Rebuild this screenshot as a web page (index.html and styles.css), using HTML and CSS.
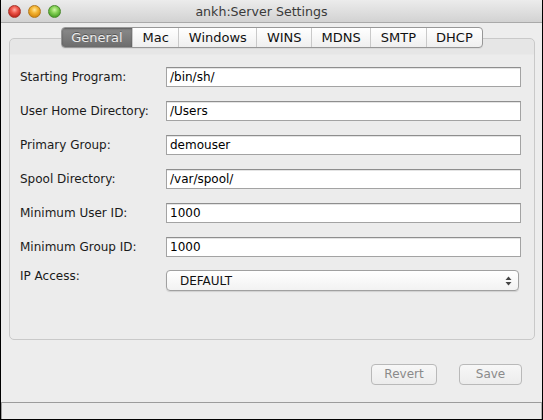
FILE: index.html
```html
<!DOCTYPE html>
<html>
<head>
<meta charset="utf-8">
<link rel="stylesheet" href="styles.css">
</head>
<body>
<div class="window">
  <div class="titlebar">
    <div class="lights">
      <span class="light red"></span>
      <span class="light yellow"></span>
      <span class="light green"></span>
    </div>
    <div class="title">ankh:Server Settings</div>
  </div>
  <div class="body">
    <div class="tabpanel">
      <div class="tabs">
        <div class="tab selected">General</div>
        <div class="tab">Mac</div>
        <div class="tab">Windows</div>
        <div class="tab">WINS</div>
        <div class="tab">MDNS</div>
        <div class="tab">SMTP</div>
        <div class="tab">DHCP</div>
      </div>
      <div class="form">
        <label class="label">Starting Program:</label>
        <div class="input">/bin/sh/</div>
        <label class="label">User Home Directory:</label>
        <div class="input">/Users</div>
        <label class="label">Primary Group:</label>
        <div class="input">demouser</div>
        <label class="label">Spool Directory:</label>
        <div class="input">/var/spool/</div>
        <label class="label">Minimum User ID:</label>
        <div class="input">1000</div>
        <label class="label">Minimum Group ID:</label>
        <div class="input">1000</div>
        <label class="label top">IP Access:</label>
        <div class="select">
          <span>DEFAULT</span>
          <svg class="arrows" width="7" height="10" viewBox="0 0 7 10"><path d="M3.5 0.5 L6.5 4 L0.5 4 Z" fill="#444"/><path d="M0.5 6 L6.5 6 L3.5 9.5 Z" fill="#444"/></svg>
        </div>
      </div>
    </div>
    <div class="buttons">
      <div class="button revert">Revert</div>
      <div class="button save">Save</div>
    </div>
  </div>
  <div class="statusbar"></div>
</div>
</body>
</html>
```
FILE: styles.css
```css
html, body {
  margin: 0;
  padding: 0;
  background: #000;
}
body {
  width: 543px;
  height: 420px;
  font-family: "DejaVu Sans", "Noto Sans", sans-serif;
  font-size: 12px;
}
.window {
  width: 543px;
  height: 420px;
  box-sizing: border-box;
  border: 1px solid #000;
  border-top: 0;
  background: #ededed;
  display: flex;
  flex-direction: column;
}
.titlebar {
  height: 22px;
  flex: none;
  background: linear-gradient(#ececec, #d2d2d2);
  border-bottom: 1px solid #a9a9a9;
  display: flex;
  align-items: center;
}
.lights {
  display: flex;
  gap: 7px;
  padding-left: 7px;
  padding-top: 1px;
}
.light {
  width: 13px;
  height: 13px;
  border-radius: 50%;
  box-sizing: border-box;
}
.red {
  background: radial-gradient(circle at 50% 35%, #ffb0a8 0, #f05a4e 35%, #c2271d 75%, #8e1a14 100%);
  border: 1px solid #a8362c;
}
.yellow {
  background: radial-gradient(circle at 50% 35%, #ffe8a0 0, #f5b838 35%, #d98d10 75%, #a46a0a 100%);
  border: 1px solid #b37a1e;
}
.green {
  background: radial-gradient(circle at 50% 35%, #d2f5a8 0, #8ad45a 35%, #4ea52a 75%, #35771a 100%);
  border: 1px solid #4b8a2e;
}
.title {
  flex: 1;
  text-align: center;
  padding-right: 80px;
  font-size: 12.6px;
  color: #3a3a3a;
}
.body {
  flex: 1;
  display: flex;
  flex-direction: column;
}
.tabpanel {
  margin: 15px 7px 0 8px;
  height: 300px;
  border: 1px solid #c9c9c9;
  border-radius: 5px;
  background: linear-gradient(#e6e6e6 0, #e6e6e6 15px, #ececec 16px);
  display: flex;
  flex-direction: column;
}
.tabs {
  margin-top: -12px;
  align-self: center;
  display: flex;
  height: 19px;
  border: 1px solid #979797;
  border-radius: 4px;
  background: linear-gradient(#ffffff, #efefef);
  overflow: hidden;
  box-shadow: 0 1px 0 rgba(0,0,0,0.05);
}
.tab {
  padding: 0 9.5px;
  font-size: 13px;
  line-height: 19px;
  color: #111;
  border-left: 1px solid #c9c9c9;
}
.tab:first-child {
  border-left: 0;
}
.tab.selected {
  background: linear-gradient(#8b8b8b, #6d6d6d);
  color: #ececec;
  text-shadow: 0 -1px 0 rgba(0,0,0,0.35);
  box-shadow: inset 0 1px 2px rgba(0,0,0,0.35);
}
.form {
  display: grid;
  grid-template-columns: 146px 355px;
  row-gap: 14px;
  padding: 19px 0 0 10px;
  align-items: center;
}
.label {
  color: #1a1a1a;
  font-size: 12px;
}
.label.top {
  align-self: start;
  margin-top: -2px;
}
.input {
  height: 20px;
  box-sizing: border-box;
  border: 1px solid #a3a3a3;
  border-top-color: #8e8e8e;
  background: #fff;
  box-shadow: inset 0 1px 0 #e4e4e4;
  padding: 0 3px;
  font-size: 12px;
  line-height: 18px;
  color: #000;
}
.select {
  margin-top: -1px;
  width: 353px;
  height: 21px;
  box-sizing: border-box;
  border: 1px solid #a0a0a0;
  border-radius: 4px;
  background: linear-gradient(#ffffff, #f2f2f2);
  box-shadow: 0 1px 1px rgba(0,0,0,0.12);
  display: flex;
  align-items: center;
  justify-content: space-between;
  padding: 0 6px 0 13px;
  font-size: 12px;
  color: #111;
}
.buttons {
  display: flex;
  justify-content: flex-end;
  gap: 22px;
  padding: 24px 20px 0 0;
}
.button {
  height: 21px;
  box-sizing: border-box;
  border: 1px solid #b9b9b9;
  border-radius: 4px;
  background: linear-gradient(#f7f7f7, #ececec);
  color: #8a8a8a;
  font-size: 12px;
  line-height: 19px;
  text-align: center;
}
.revert {
  width: 66px;
}
.save {
  width: 63px;
}
.statusbar {
  margin-top: auto;
  height: 16px;
  flex: none;
  border-top: 1px solid #9c9c9c;
  border-left: 1px solid #a0a0a0;
  border-right: 1px solid #b0b0b0;
  background: #ececec;
}
```
